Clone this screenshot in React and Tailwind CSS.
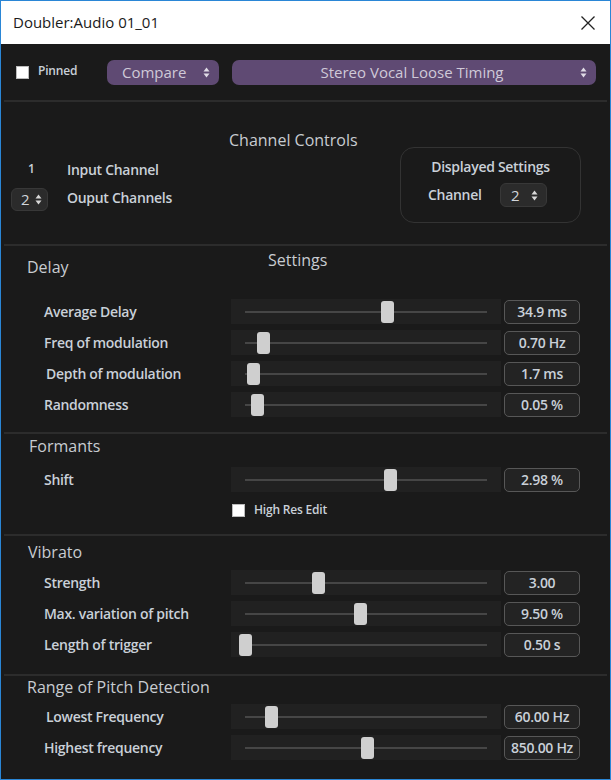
import React from 'react';

const UpDown = ({ className = '' }) => (
  <svg width="7" height="11" viewBox="0 0 7 11" className={className}>
    <path d="M3.5 0.5 L6.5 4.5 L0.5 4.5 Z" fill="currentColor" />
    <path d="M3.5 10.5 L6.5 6.5 L0.5 6.5 Z" fill="currentColor" />
  </svg>
);

const Divider = () => <div className="h-[2px] mx-[3px] bg-[#2c2c2c] shrink-0" />;

const SmallSelect = ({ value }) => (
  <div className="w-[37px] h-[23px] rounded-[6px] bg-[#2b2b2b] border border-[#383838] flex items-center pl-[9px] pr-[5px] justify-between text-[15px] text-[#d2d6db]">
    <span>{value}</span>
    <UpDown className="text-[#d8d8d8]" />
  </div>
);

const SliderRow = ({ label, pos, value, labelPad = 'pl-[43px]' }) => (
  <div className="flex items-center h-[31px]">
    <div className={`w-[230px] ${labelPad} text-[14px] font-semibold tracking-[-0.3px] text-[#c9d0d8] whitespace-nowrap`}>{label}</div>
    <div className="relative w-[270px] h-[25px] bg-[#212121]">
      <div className="absolute left-[14px] right-[14px] top-[12px] h-[2px] bg-[#464646]" />
      <div
        className="absolute top-[1.5px] w-[13px] h-[22px] rounded-[3px] bg-[#cfcfcf]"
        style={{ left: `${14 + pos - 6.5}px` }}
      />
    </div>
    <div className="ml-[3px] w-[76px] h-[24px] rounded-[5px] border border-[#575757] bg-[#232323] flex items-center justify-center text-[14px] font-semibold tracking-[-0.3px] text-[#c9d0d8] whitespace-nowrap">
      {value}
    </div>
  </div>
);

const Header = ({ children, className = '' }) => (
  <div className={`h-[20px] leading-[20px] text-[16px] text-[#c8ccd1] whitespace-nowrap ${className}`}>{children}</div>
);

export default function App() {
  return (
    <div
      className="w-[611px] h-[780px] flex flex-col border border-[#2a86d6] bg-[#1a1a1a] overflow-hidden"
      style={{ fontFamily: '"Open Sans", "Noto Sans", sans-serif' }}
    >
      {/* title bar */}
      <div className="h-[43px] bg-white flex items-center justify-between pl-[12px] pr-[14px] shrink-0">
        <span className="text-[15px] text-[#1a1a1a]">Doubler:Audio 01_01</span>
        <svg width="16" height="16" viewBox="0 0 16 16">
          <path d="M1.5 1.5 L14.5 14.5 M14.5 1.5 L1.5 14.5" stroke="#222" strokeWidth="1.3" />
        </svg>
      </div>

      {/* top row */}
      <div className="h-[56px] flex items-center pl-[15px] shrink-0">
        <div className="w-[91px] flex items-center">
          <div className="w-[13px] h-[13px] bg-white border border-[#bbb] mt-[1px]" />
          <span className="ml-[9px] text-[12px] font-semibold tracking-[-0.2px] text-[#c9d0d8] -mt-[2px]">Pinned</span>
        </div>
        <div className="w-[112px] h-[25px] rounded-[7px] bg-[#5f4a73] flex items-center justify-between pl-[15px] pr-[9px] text-[15px] text-[#cfc9d8]">
          <span>Compare</span>
          <UpDown className="text-[#e0dbe6]" />
        </div>
        <div className="ml-[13px] w-[364px] h-[25px] rounded-[7px] bg-[#5f4a73] flex items-center pr-[9px] text-[15px] text-[#cfc9d8]">
          <span className="flex-1 text-center pl-[12px]">Stereo Vocal Loose Timing</span>
          <UpDown className="text-[#e0dbe6]" />
        </div>
      </div>
      <Divider />

      {/* channel controls */}
      <div className="h-[142px] flex shrink-0">
        <div className="w-[399px] flex flex-col">
          <div className="pt-[27px] h-[49px] leading-[22px] text-[16px] text-[#c8ccd1] pl-[228px] whitespace-nowrap">
            Channel Controls
          </div>
          <div className="mt-[7px] h-[22px] flex items-center text-[14px] font-semibold tracking-[-0.3px] text-[#c9d0d8]">
            <span className="w-[66px] pl-[27px] text-[12px]">1</span>
            <span>Input Channel</span>
          </div>
          <div className="mt-[8px] h-[23px] flex items-center pl-[10px]">
            <SmallSelect value="2" />
            <span className="ml-[19px] -mt-[4px] text-[14px] font-semibold tracking-[-0.3px] text-[#c9d0d8]">Ouput Channels</span>
          </div>
        </div>
        <div className="mt-[45px] w-[181px] h-[76px] rounded-[14px] border border-[#333] flex flex-col items-center">
          <div className="mt-[8px] text-[14px] font-semibold tracking-[-0.3px] text-[#c9d0d8]">Displayed Settings</div>
          <div className="mt-[6px] flex items-center w-full pl-[27px]">
            <span className="text-[14px] font-semibold tracking-[-0.3px] text-[#c9d0d8] w-[72px] -mt-[2px]">Channel</span>
            <div className="w-[47px] h-[24px] rounded-[6px] bg-[#2b2b2b] border border-[#383838] flex items-center pl-[10px] pr-[8px] justify-between text-[15px] text-[#d2d6db]">
              <span>2</span>
              <UpDown className="text-[#d8d8d8]" />
            </div>
          </div>
        </div>
      </div>
      <Divider />

      {/* delay */}
      <div className="h-[186px] flex flex-col shrink-0">
        <div className="h-[50px] flex pl-[26px]">
          <Header className="w-[241px] mt-[11px]">Delay</Header>
          <Header className="mt-[4px]">Settings</Header>
        </div>
        <SliderRow label="Average Delay" pos={142} value="34.9 ms" />
        <SliderRow label="Freq of modulation" pos={18} value="0.70 Hz" />
        <SliderRow label="Depth of modulation" pos={8} value="1.7 ms" labelPad="pl-[45px]" />
        <SliderRow label="Randomness" pos={12} value="0.05 %" />
      </div>
      <Divider />

      {/* formants */}
      <div className="h-[100px] flex flex-col shrink-0">
        <Header className="mt-[2px] pl-[28px]">Formants</Header>
        <div className="mt-[8px]">
          <SliderRow label="Shift" pos={145} value="2.98 %" />
        </div>
        <div className="mt-[5px] h-[20px] flex items-center pl-[231px]">
          <div className="w-[13px] h-[13px] bg-white border border-[#bbb]" />
          <span className="ml-[9px] text-[12px] font-semibold tracking-[-0.2px] text-[#c9d0d8]">High Res Edit</span>
        </div>
      </div>
      <Divider />

      {/* vibrato */}
      <div className="h-[138px] flex flex-col shrink-0">
        <Header className="mt-[6px] pl-[27px]">Vibrato</Header>
        <div className="mt-[5px]">
          <SliderRow label="Strength" pos={73} value="3.00" />
          <SliderRow label="Max. variation of pitch" pos={115} value="9.50 %" />
          <SliderRow label="Length of trigger" pos={0} value="0.50 s" />
        </div>
      </div>
      <Divider />

      {/* range of pitch */}
      <div className="flex-1 flex flex-col">
        <Header className="mt-[1px] pl-[26px]">Range of Pitch Detection</Header>
        <div className="mt-[4px]">
          <SliderRow label="Lowest Frequency" pos={26} value="60.00 Hz" labelPad="pl-[45px]" />
          <SliderRow label="Highest frequency" pos={122} value="850.00 Hz" />
        </div>
      </div>
    </div>
  );
}
